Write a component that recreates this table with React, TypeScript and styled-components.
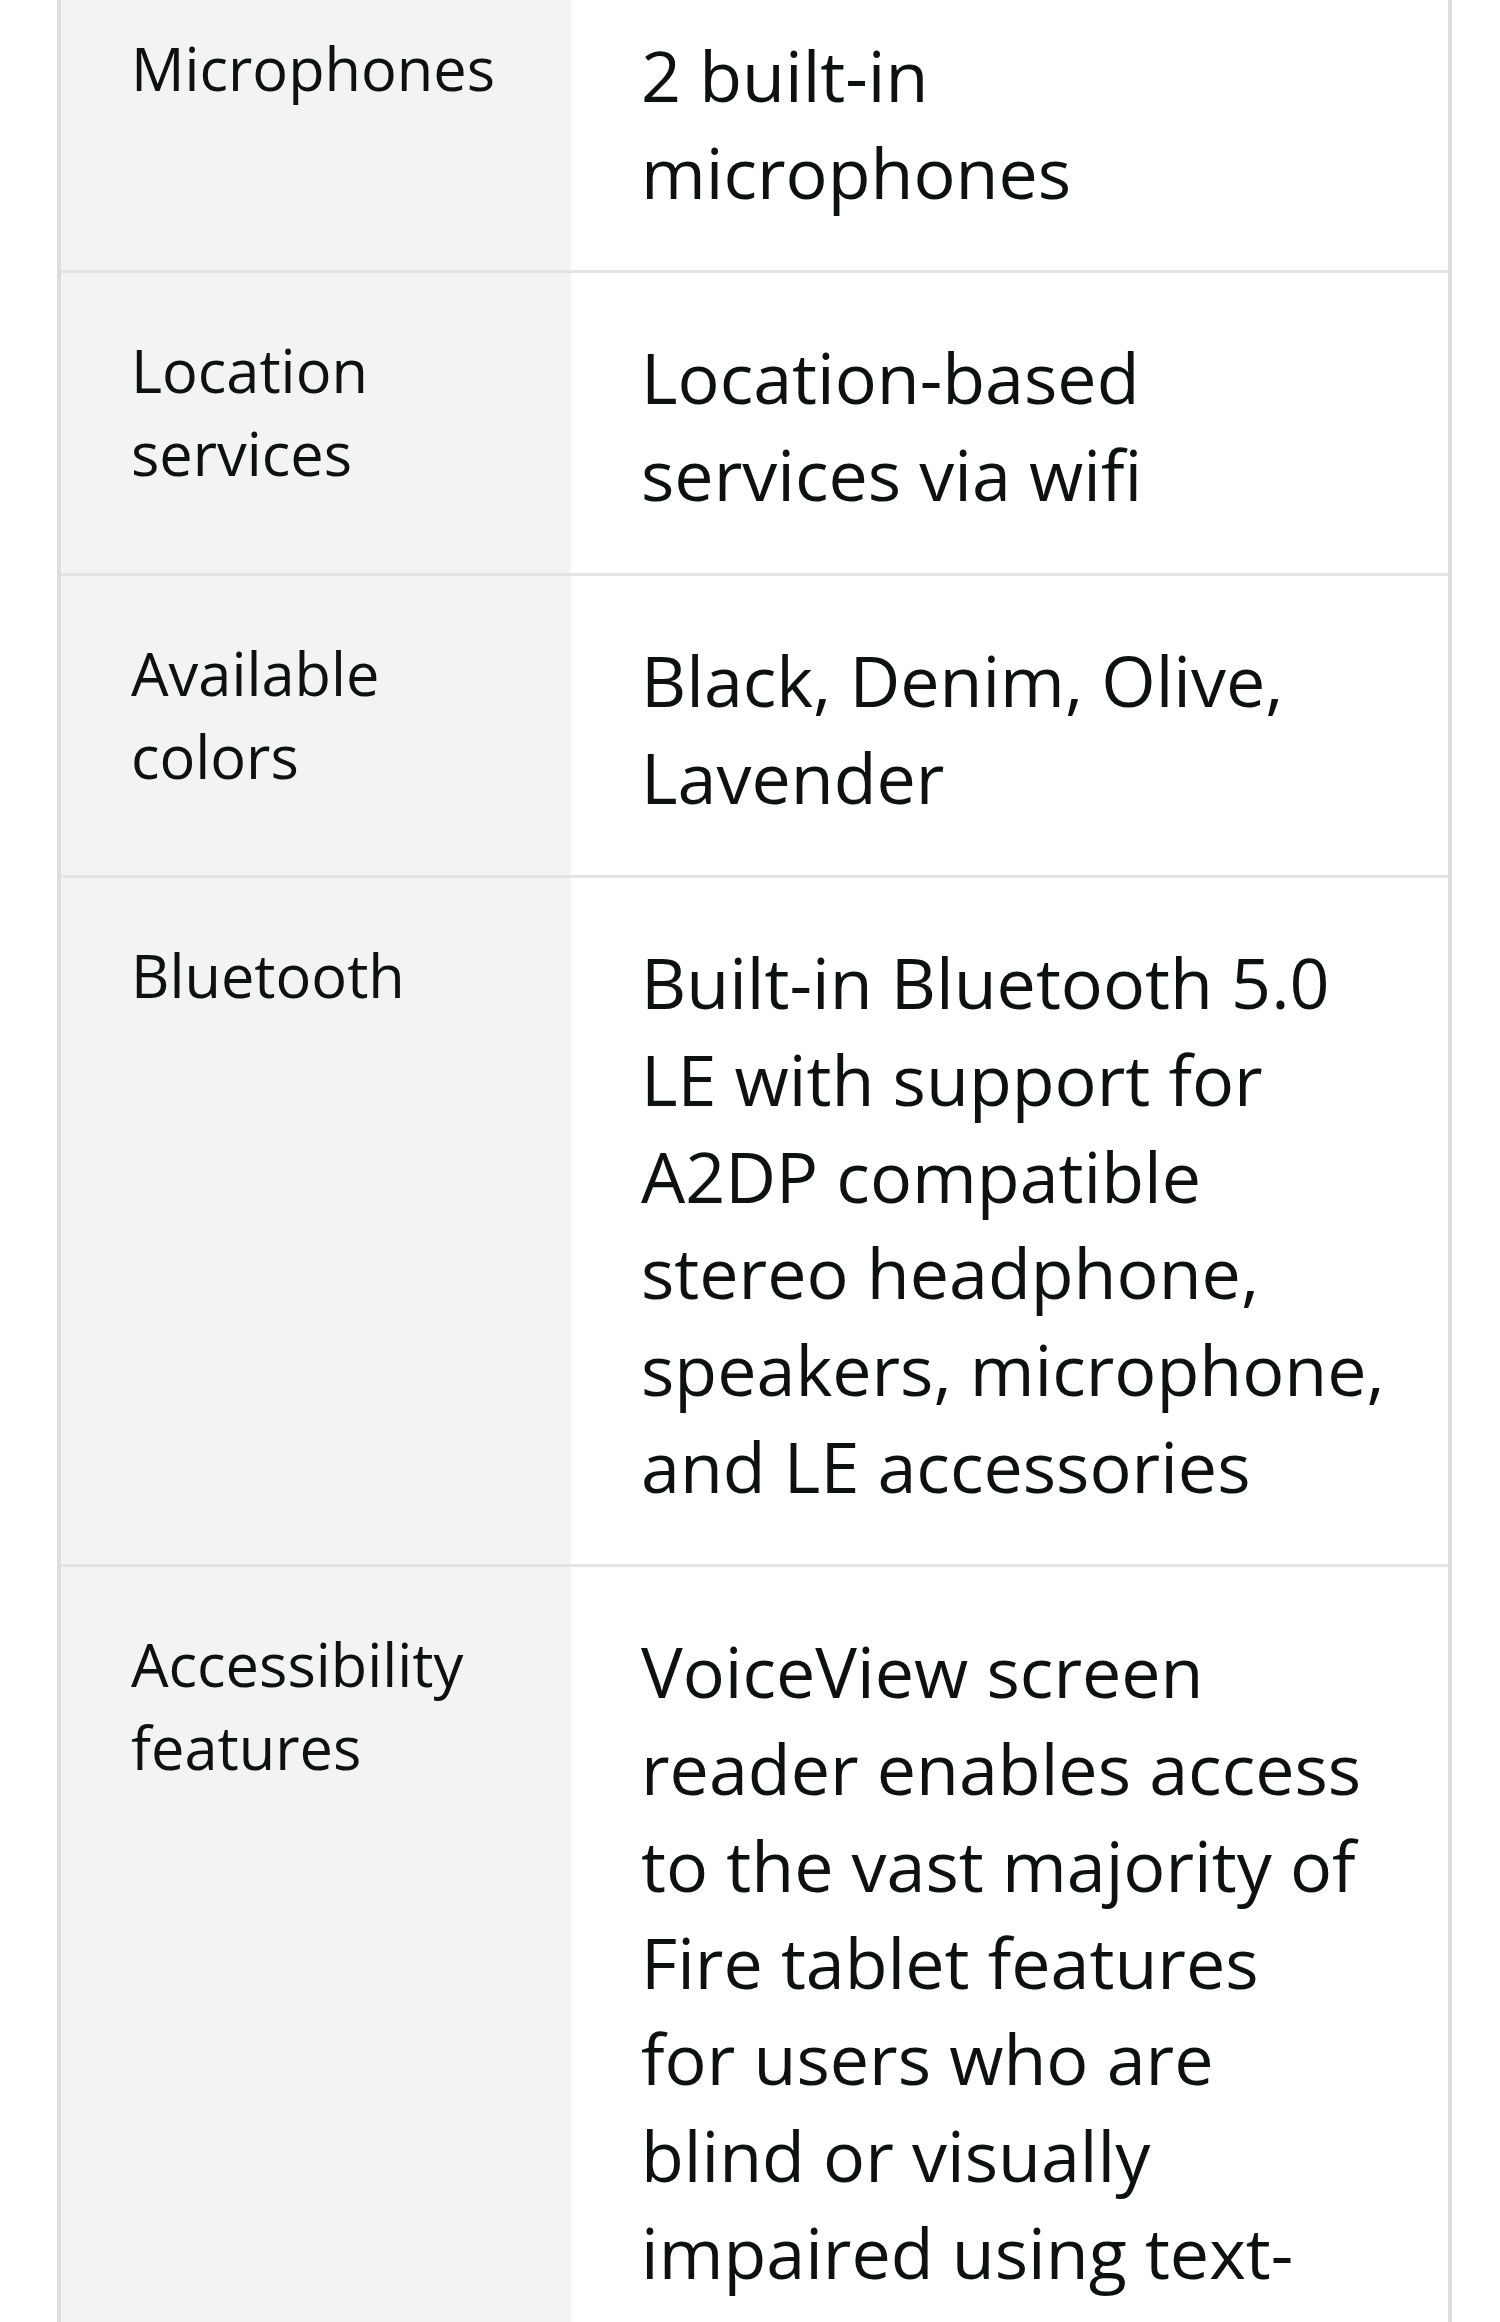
import React from 'react';
import styled, { createGlobalStyle } from 'styled-components';

const GlobalStyle = createGlobalStyle`
  html, body {
    margin: 0;
    padding: 0;
    background: #ffffff;
  }
  body {
    font-family: "Open Sans", "Noto Sans", "Liberation Sans", sans-serif;
    color: #0f1111;
    overflow: hidden;
  }
`;

const Page = styled.div`
  width: 1500px;
  height: 2322px;
  overflow: hidden;
`;

// the first row is scrolled partly out of view
const SpecTable = styled.table`
  margin: -29px 0 0 57px;
  width: 1395px;
  table-layout: fixed;
  border-collapse: separate;
  border-spacing: 0;
  border-left: 4px solid #dddddd;
  border-right: 4px solid #dddddd;
`;

const Label = styled.th`
  width: 510px;
  box-sizing: border-box;
  padding: 55px 20px 53px 70px;
  background: #f3f3f3;
  border-bottom: 3px solid #e3e3e3;
  vertical-align: top;
  text-align: left;
  font-weight: 400;
  font-size: 59.5px;
  line-height: 83px;
`;

const Value = styled.td`
  box-sizing: border-box;
  padding: 56px 40px 50px 70px;
  background: #ffffff;
  border-bottom: 3px solid #e3e3e3;
  vertical-align: top;
  font-size: 70px;
  line-height: 96.7px;
`;

const Line = styled.span`
  display: block;
  white-space: nowrap;
`;

interface Spec {
  label: string[];
  value: string[];
}

const specs: Spec[] = [
  { label: ['Microphones'], value: ['2 built-in', 'microphones'] },
  { label: ['Location', 'services'], value: ['Location-based', 'services via wifi'] },
  { label: ['Available', 'colors'], value: ['Black, Denim, Olive,', 'Lavender'] },
  {
    label: ['Bluetooth'],
    value: [
      'Built-in Bluetooth 5.0',
      'LE with support for',
      'A2DP compatible',
      'stereo headphone,',
      'speakers, microphone,',
      'and LE accessories',
    ],
  },
  {
    label: ['Accessibility', 'features'],
    value: [
      'VoiceView screen',
      'reader enables access',
      'to the vast majority of',
      'Fire tablet features',
      'for users who are',
      'blind or visually',
      'impaired using text-',
      'to-speech, screen',
      'magnifier, and more',
    ],
  },
];

const App: React.FC = () => {
  return (
    <Page>
      <GlobalStyle />
      <SpecTable>
        <tbody>
          {specs.map((spec) => (
            <tr key={spec.label.join(' ')}>
              <Label scope="row">
                {spec.label.map((l) => (
                  <Line key={l}>{l}</Line>
                ))}
              </Label>
              <Value>
                {spec.value.map((v) => (
                  <Line key={v}>{v}</Line>
                ))}
              </Value>
            </tr>
          ))}
        </tbody>
      </SpecTable>
    </Page>
  );
};

export default App;
